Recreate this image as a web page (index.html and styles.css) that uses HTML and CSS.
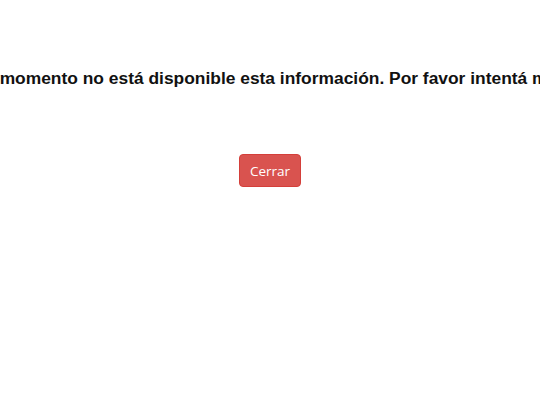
FILE: index.html
```html
<!DOCTYPE html>
<html lang="es">
<head>
<meta charset="utf-8">
<link rel="stylesheet" href="styles.css">
</head>
<body>
<div class="modal">
  <div class="message-row">
    <p class="message">En este momento no está disponible esta información. Por favor intentá más tarde.</p>
  </div>
  <div class="actions">
    <button class="btn-close" type="button">Cerrar</button>
  </div>
</div>
</body>
</html>
```

FILE: styles.css
```css
html, body {
  margin: 0;
  padding: 0;
  background: #ffffff;
  overflow: hidden;
}
.modal {
  width: 540px;
  height: 405px;
  display: flex;
  flex-direction: column;
  align-items: center;
}
.message-row {
  width: 540px;
  box-sizing: border-box;
  display: flex;
  justify-content: center;
  padding-top: 67px;
  padding-left: 12px;
}
.message {
  margin: 0;
  white-space: nowrap;
  flex-shrink: 0;
  font-family: "Liberation Sans", Arial, sans-serif;
  font-weight: bold;
  font-size: 17.4px;
  line-height: 22px;
  color: #111111;
}
.actions {
  margin-top: 65px;
  display: flex;
  justify-content: center;
}
.btn-close {
  width: 62px;
  height: 33px;
  border: 1px solid #d43f3a;
  border-radius: 4px;
  background: #d9534f;
  color: #ffffff;
  font-family: "Open Sans", "Noto Sans", sans-serif;
  font-size: 13.5px;
  padding: 0;
}
```
